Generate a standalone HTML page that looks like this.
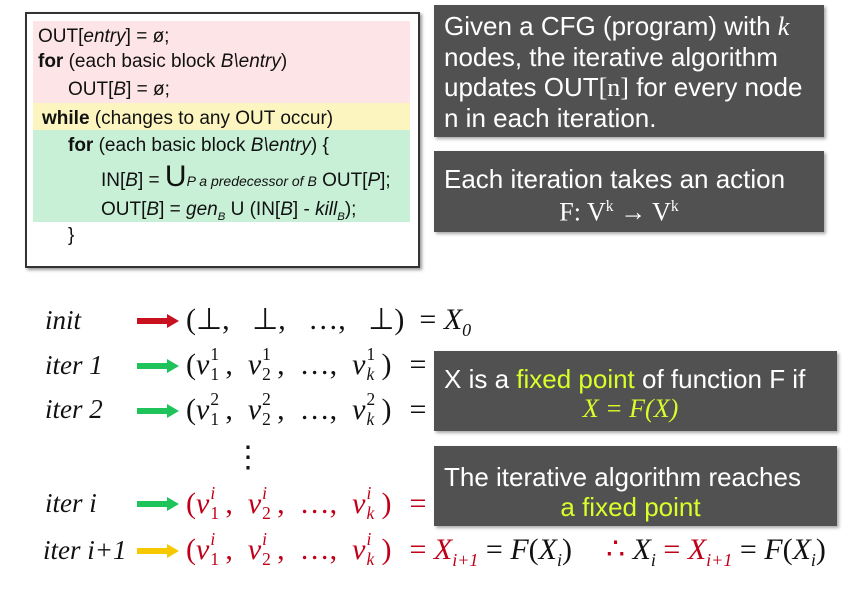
<!DOCTYPE html>
<html><head><meta charset="utf-8"><style>
body{margin:0;width:857px;height:589px;background:#fff;position:relative;overflow:hidden;font-family:"Liberation Sans",sans-serif}
.abs{position:absolute}
#code{left:25px;top:12px;width:391px;height:252px;border:2px solid #333;box-shadow:2px 2px 3px #999;background:#fff}
.band{position:absolute;left:6px;width:377px}
.cl{position:absolute;font-size:19px;color:#111;white-space:nowrap;line-height:22px}
.box{position:absolute;background:#515151;color:#fff;font-size:26px;box-shadow:2px 2px 3px #aaa;white-space:nowrap}
.m{position:absolute;font-family:"Liberation Serif",serif;font-size:30px;white-space:nowrap;color:#111;line-height:40px}
.lab{position:absolute;font-family:"Liberation Serif",serif;font-style:italic;font-size:27px;color:#111;line-height:30px}
.arr{position:absolute;width:42px;height:14px}
.r{color:#c00018}
sub,sup{font-size:60%}
.y{color:#d8ff2a}
.ss{display:inline-block;position:relative;width:15px;height:1em;font-size:58%;margin-left:1px}
.ss .u{position:absolute;left:0;top:-0.6em;line-height:1}
.ss .d{position:absolute;left:0;top:0.55em;line-height:1}
.eq{margin-left:18px}
</style></head><body>
<div id="code" class="abs">
<div class="band" style="top:7px;height:82px;background:#fde4e6"></div>
<div class="band" style="top:89px;height:27px;background:#fdf5bf"></div>
<div class="band" style="top:116px;height:92px;background:#c8f0d6"></div>
<div class="cl" style="left:11px;top:12px">OUT[<i>entry</i>] = ø;</div>
<div class="cl" style="left:11px;top:37px"><b>for</b> (each basic block <i>B\entry</i>)</div>
<div class="cl" style="left:41px;top:65px">OUT[<i>B</i>] = ø;</div>
<div class="cl" style="left:15px;top:94px"><b>while</b> (changes to any OUT occur)</div>
<div class="cl" style="left:41px;top:121px"><b>for</b> (each basic block <i>B\entry</i>) {</div>
<div class="cl" style="left:74px;top:152px">IN[<i>B</i>] = <span style="font-size:30px">U</span><i style="font-size:14px">P a predecessor of B</i> OUT[<i>P</i>];</div>
<div class="cl" style="left:74px;top:185px">OUT[<i>B</i>] = <i>gen<sub>B</sub></i> U (IN[<i>B</i>] - <i>kill<sub>B</sub></i>);</div>
<div class="cl" style="left:41px;top:211px">}</div>
</div>

<div class="box" style="left:434px;top:5px;width:390px;height:132px"><div style="padding:6px 0 0 10px;line-height:30px">Given a CFG (program) with <i style="font-family:'Liberation Serif',serif">k</i><br>nodes, the iterative algorithm<br>updates OUT<span style="font-family:'Liberation Serif',serif">[n]</span> for every node<br>n in each iteration.</div></div>
<div class="box" style="left:434px;top:151px;width:390px;height:81px"><div style="padding:14px 0 0 10px;line-height:28px">Each iteration takes an action<br><div style="text-align:center;padding-right:30px;font-family:'Liberation Serif',serif">F: V<sup>k</sup> → V<sup>k</sup></div></div></div>

<div class="box" style="left:434px;top:351px;width:403px;height:80px"><div style="padding:14px 0 0 10px;line-height:29px">X is a <span class="y">fixed point</span> of function F if<div style="text-align:center;font-family:'Liberation Serif',serif;font-style:italic;padding-right:20px" class="y">X = F(X)</div></div></div>
<div class="box" style="left:434px;top:446px;width:403px;height:80px"><div style="padding:16px 0 0 10px;line-height:30px">The iterative algorithm reaches<div style="text-align:center;padding-right:20px" class="y">a fixed point</div></div></div>

<div class="lab" style="left:45px;top:305px">init</div>
<div class="lab" style="left:45px;top:350px">iter 1</div>
<div class="lab" style="left:45px;top:394px">iter 2</div>
<div class="lab" style="left:45px;top:488px">iter i</div>
<div class="lab" style="left:43px;top:535px">iter i+1</div>

<svg class="arr" style="left:137px;top:314px" viewBox="0 0 42 14"><path d="M0 4h30V0l12 7-12 7v-4H0z" fill="#c8101e"/></svg>
<svg class="arr" style="left:137px;top:359px" viewBox="0 0 42 14"><path d="M0 4h30V0l12 7-12 7v-4H0z" fill="#1ec45a"/></svg>
<svg class="arr" style="left:137px;top:404px" viewBox="0 0 42 14"><path d="M0 4h30V0l12 7-12 7v-4H0z" fill="#1ec45a"/></svg>
<svg class="arr" style="left:137px;top:497px" viewBox="0 0 42 14"><path d="M0 4h30V0l12 7-12 7v-4H0z" fill="#1ec45a"/></svg>
<svg class="arr" style="left:137px;top:544px" viewBox="0 0 42 14"><path d="M0 4h30V0l12 7-12 7v-4H0z" fill="#f5c800"/></svg>

<div class="m" style="left:186px;top:300px">(⊥,&nbsp;&nbsp; ⊥,&nbsp;&nbsp; …,&nbsp;&nbsp; ⊥)&nbsp; = <i>X<sub>0</sub></i></div>
<div class="m" style="left:186px;top:345px">(<i>v</i><span class="ss"><span class="u">1</span><span class="d">1</span></span>,&ensp;<i>v</i><span class="ss"><span class="u">1</span><span class="d">2</span></span>,&ensp;…,&ensp;<i>v</i><span class="ss"><span class="u">1</span><i class="d">k</i></span>)<span class="eq">=</span></div>
<div class="m" style="left:186px;top:390px">(<i>v</i><span class="ss"><span class="u">2</span><span class="d">1</span></span>,&ensp;<i>v</i><span class="ss"><span class="u">2</span><span class="d">2</span></span>,&ensp;…,&ensp;<i>v</i><span class="ss"><span class="u">2</span><i class="d">k</i></span>)<span class="eq">=</span></div>
<div class="m" style="left:233px;top:438px">⋮</div>
<div class="m r" style="left:186px;top:484px">(<i>v</i><span class="ss"><i class="u">i</i><span class="d">1</span></span>,&ensp;<i>v</i><span class="ss"><i class="u">i</i><span class="d">2</span></span>,&ensp;…,&ensp;<i>v</i><span class="ss"><i class="u">i</i><i class="d">k</i></span>)<span class="eq">=</span></div>
<div class="m" style="left:186px;top:530px"><span class="r">(<i>v</i><span class="ss"><i class="u">i</i><span class="d">1</span></span>,&ensp;<i>v</i><span class="ss"><i class="u">i</i><span class="d">2</span></span>,&ensp;…,&ensp;<i>v</i><span class="ss"><i class="u">i</i><i class="d">k</i></span>)<span class="eq">=</span> <i>X<sub>i+1</sub></i></span> = <i>F</i>(<i>X<sub>i</sub></i>)<span style="margin-left:34px" class="r">∴</span> <i>X<sub>i</sub></i> <span class="r">= <i>X<sub>i+1</sub></i></span> = <i>F</i>(<i>X<sub>i</sub></i>)</div>
</body></html>
